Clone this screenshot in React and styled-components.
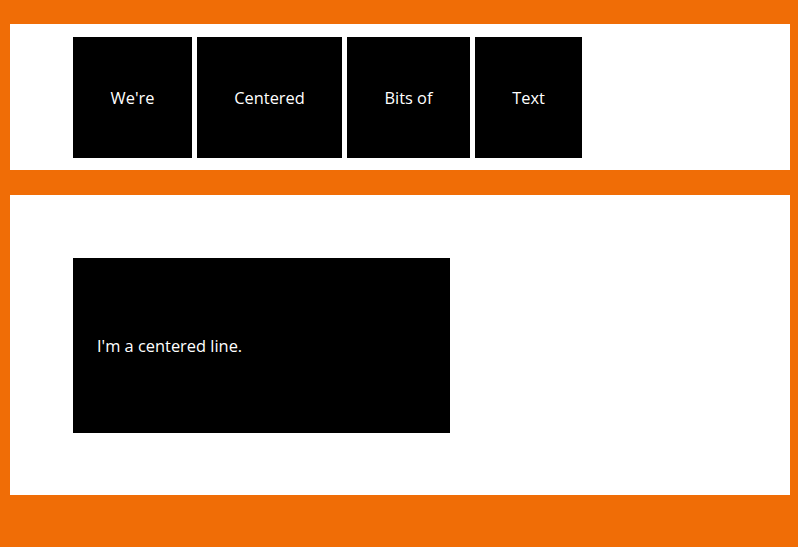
import React from "react";
import styled, { createGlobalStyle } from "styled-components";

const Global = createGlobalStyle`
  html, body { margin: 0; padding: 0; }
  body {
    background: #f06d06;
    font-family: "Open Sans", "Noto Sans", sans-serif;
    font-size: 16.4px;
  }
`;

const Page = styled.div`
  display: flex;
  flex-direction: column;
  gap: 25px;
  padding: 24px 8px 52px 10px;
`;

const Section = styled.section`
  background: #fff;
  height: ${(p) => p.$h}px;
  box-sizing: border-box;
  padding: ${(p) => p.$pad};
  display: flex;
`;

const Row = styled.div`
  display: flex;
  gap: 5px;
  height: 121px;
`;

const Cell = styled.div`
  background: #000;
  color: #fff;
  width: ${(p) => p.$w}px;
  display: flex;
  align-items: center;
  justify-content: center;
`;

const Block = styled.div`
  background: #000;
  color: #fff;
  width: 377px;
  height: 175px;
  box-sizing: border-box;
  padding: 0 24px;
  display: flex;
  align-items: center;
`;

const cells = [
  ["We're", 119],
  ["Centered", 145],
  ["Bits of", 123],
  ["Text", 107],
];

export default function App() {
  return (
    <>
      <Global />
      <Page>
        <Section $h={146} $pad="13px 63px 12px">
          <Row>
            {cells.map(([t, w]) => (
              <Cell key={t} $w={w}>{t}</Cell>
            ))}
          </Row>
        </Section>
        <Section $h={300} $pad="63px 63px 62px">
          <Block>I'm a centered line.</Block>
        </Section>
      </Page>
    </>
  );
}
